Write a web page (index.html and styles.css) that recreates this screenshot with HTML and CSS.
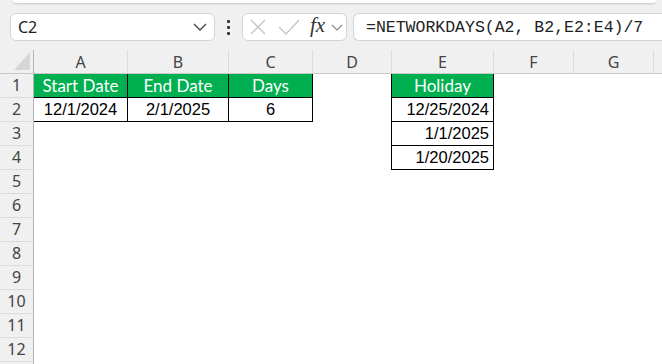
FILE: index.html
```html
<!DOCTYPE html>
<html>

<head>
    <link rel="stylesheet" href="styles.css">
</head>

<body>
    <div class="ribbon-edge"></div>

    <div class="formula-bar">
        <div class="name-box">
            <span>C2</span>
            <svg width="14" height="8" viewBox="0 0 14 8"><path d="M1 1l6 6 6-6" fill="none" stroke="#444" stroke-width="1.3"/></svg>
        </div>
        <div class="dots"><i></i><i></i><i></i></div>
        <div class="fx-box">
            <svg width="16" height="16" viewBox="0 0 16 16"><path d="M1 1l14 14M15 1L1 15" fill="none" stroke="#c4c4c4" stroke-width="1.3"/></svg>
            <svg width="22" height="16" viewBox="0 0 22 16"><path d="M1 8l7 7L21 1" fill="none" stroke="#c4c4c4" stroke-width="1.3"/></svg>
            <span class="fx">fx</span>
            <svg width="12" height="7" viewBox="0 0 12 7"><path d="M1 1l5 5 5-5" fill="none" stroke="#888" stroke-width="1.2"/></svg>
        </div>
        <div class="formula">=NETWORKDAYS(A2, B2,E2:E4)/7</div>
    </div>

    <div class="sheet">
        <div class="corner"><div class="tri"></div></div>
        <div class="col-head">A</div>
        <div class="col-head">B</div>
        <div class="col-head">C</div>
        <div class="col-head">D</div>
        <div class="col-head">E</div>
        <div class="col-head">F</div>
        <div class="col-head">G</div>
        <div class="col-head last"></div>

        <div class="row-head">1</div>
        <div class="cell t head">Start Date</div>
        <div class="cell t head">End Date</div>
        <div class="cell t head">Days</div>
        <div class="cell edge"></div>
        <div class="cell t head">Holiday</div>
        <div class="cell"></div>
        <div class="cell"></div>
        <div class="cell"></div>

        <div class="row-head">2</div>
        <div class="cell t">12/1/2024</div>
        <div class="cell t">2/1/2025</div>
        <div class="cell t">6</div>
        <div class="cell edge"></div>
        <div class="cell t num">12/25/2024</div>
        <div class="cell"></div>
        <div class="cell"></div>
        <div class="cell"></div>

        <div class="row-head">3</div>
        <div class="cell"></div>
        <div class="cell"></div>
        <div class="cell"></div>
        <div class="cell edge"></div>
        <div class="cell t num">1/1/2025</div>
        <div class="cell"></div>
        <div class="cell"></div>
        <div class="cell"></div>

        <div class="row-head">4</div>
        <div class="cell"></div>
        <div class="cell"></div>
        <div class="cell"></div>
        <div class="cell edge"></div>
        <div class="cell t num">1/20/2025</div>
        <div class="cell"></div>
        <div class="cell"></div>
        <div class="cell"></div>

        <div class="row-head">5</div><div class="blank"></div>
        <div class="row-head">6</div><div class="blank"></div>
        <div class="row-head">7</div><div class="blank"></div>
        <div class="row-head">8</div><div class="blank"></div>
        <div class="row-head">9</div><div class="blank"></div>
        <div class="row-head">10</div><div class="blank"></div>
        <div class="row-head">11</div><div class="blank"></div>
        <div class="row-head">12</div><div class="blank"></div>
        <div class="row-head"></div><div class="blank"></div>
    </div>
</body>

</html>
```

FILE: styles.css
```css
body {
    margin: 0;
    background: #f0f0f0;
    font-family: "Noto Sans", sans-serif;
    overflow: hidden;
    height: 364px;
}

.ribbon-edge {
    height: 3px;
    margin: 0 6px 0 13px;
    background: #fff;
    border-radius: 0 0 8px 8px;
    box-shadow: 0 1px 2px rgba(0, 0, 0, 0.18);
}

.formula-bar {
    display: flex;
    align-items: center;
    margin: 10px 0 0 10px;
    height: 28px;
}

.name-box,
.fx-box,
.formula {
    box-sizing: border-box;
    height: 28px;
    background: #fff;
    border: 1px solid #d4d4d4;
    border-radius: 6px;
    display: flex;
    align-items: center;
}

.name-box {
    width: 205px;
    padding: 0 7px 0 7px;
    justify-content: space-between;
    font-family: "Noto Sans", sans-serif;
    font-size: 16px;
    color: #222;
}

.dots {
    width: 6px;
    margin: 0 11px 0 10px;
    display: flex;
    flex-direction: column;
    align-items: center;
    gap: 3px;
}

.dots i {
    width: 3px;
    height: 3px;
    background: #333;
    border-radius: 1px;
}

.fx-box {
    width: 105px;
    padding: 0 0 0 7px;
    gap: 0;
}

.fx-box svg:nth-child(2) {
    margin-left: 12px;
}

.fx {
    font-family: "Liberation Serif", serif;
    font-style: italic;
    font-size: 21px;
    color: #333;
    margin: -3px 0 0 10px;
}

.fx-box svg:last-child {
    margin-left: 6px;
}

.formula {
    flex: 1;
    margin-left: 6px;
    padding-left: 12px;
    border-right: none;
    border-radius: 6px 0 0 6px;
    font-family: "Liberation Mono", monospace;
    font-size: 16.5px;
    color: #222;
}

.sheet {
    margin-top: 9px;
    display: grid;
    grid-template-columns: 34px 94px 101px 84px 79px 102px 80px 80px 1fr;
    grid-auto-rows: 24px;
}

.corner,
.col-head,
.row-head,
.cell,
.blank {
    box-sizing: border-box;
}

.corner {
    border-right: 1px solid #b5b5b5;
    border-bottom: 1px solid #c8c8c8;
    position: relative;
}

.tri {
    position: absolute;
    right: 3px;
    bottom: 3px;
    width: 0;
    height: 0;
    border-left: 16px solid transparent;
    border-bottom: 18px solid #d6d6d6;
}

.col-head {
    border-right: 1px solid #dadada;
    border-bottom: 1px solid #c8c8c8;
    text-align: center;
    font-size: 16px;
    line-height: 24px;
    color: #444;
}

.col-head.last {
    border-right: none;
}

.row-head {
    border-right: 1px solid #b5b5b5;
    border-bottom: 1px solid #dadada;
    text-align: center;
    font-size: 16px;
    line-height: 23px;
    color: #444;
}

.cell {
    background: #fff;
    font-family: "Liberation Sans", sans-serif;
    font-size: 16.5px;
    line-height: 23px;
    color: #000;
    text-align: center;
}

.blank {
    grid-column: 2 / -1;
    background: #fff;
}

.cell.t {
    border-right: 1px solid #000;
    border-bottom: 1px solid #000;
}

.cell.edge {
    border-right: 1px solid #000;
}

.cell.head {
    background: #00b050;
    color: #fff;
    font-family: Lato, sans-serif;
    font-size: 17px;
}

.cell.num {
    text-align: right;
    padding-right: 4px;
}
```
